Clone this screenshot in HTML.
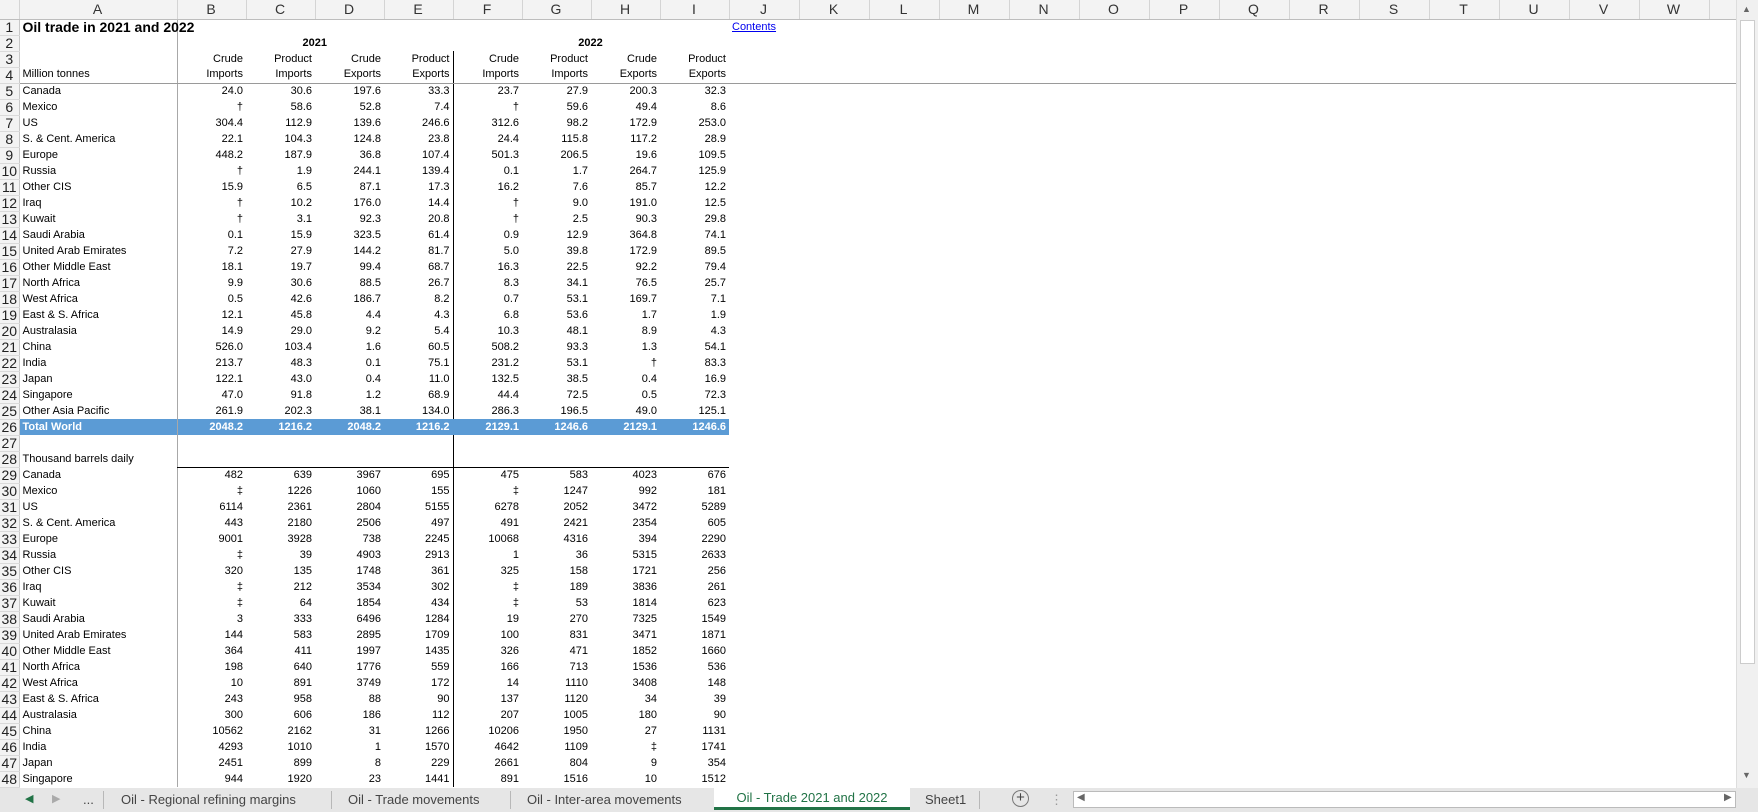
<!DOCTYPE html>
<html><head><meta charset="utf-8">
<style>
*{margin:0;padding:0;box-sizing:border-box}
body{width:1758px;height:812px;overflow:hidden;background:#fff;font-family:"Liberation Sans Narrow","Liberation Sans",Arial,sans-serif;font-size:11px;color:#000;position:relative}
table{position:absolute;left:0;top:0;border-collapse:collapse;table-layout:fixed;width:1736px}
td,th{height:16px;line-height:15px;padding:0 3px 0 2px;white-space:nowrap;overflow:visible;text-align:right;font-weight:normal}
th.r{background:#f3f3f3;border-right:1px solid #c8c8c8;border-bottom:1px solid #dadada;text-align:center;font-size:14px;color:#222;padding:0;font-family:"Liberation Sans",Arial,sans-serif}
tr.h th{height:19px;background:#f3f3f3;border-right:1px solid #d4d4d4;border-bottom:1px solid #bdbdbd;font-size:14px;color:#333;text-align:center;font-family:"Liberation Sans",Arial,sans-serif}
td.a{text-align:left;padding-left:3px}
tr td:nth-child(3){border-left:1px solid #a8a8a8}
tr.b td:nth-child(6){border-right:1px solid #000}
tr.g td{border-bottom:1px solid #9a9a9a}
tr.k td:nth-child(n+3):nth-child(-n+10){border-bottom:1px solid #000}
tr.t td:nth-child(-n+10){background:#5b9bd5;color:#fff;font-weight:bold}
tr.t td:nth-child(6){border-right:1px solid #5b9bd5}
.tabs{position:absolute;left:0;top:788px;width:1758px;height:24px;background:#e6e6e6;font-family:"Liberation Sans",Arial,sans-serif;font-size:13px;color:#444}
.tabs span{position:absolute;top:4px}
.sep{position:absolute;top:3px;width:1px;height:18px;background:#b8b8b8}
.act{position:absolute;left:714px;top:0;width:196px;height:22px;background:#fff;border-bottom:3px solid #217346;color:#217346;text-align:center;line-height:20px}
.vs{position:absolute;left:1736px;top:0;width:22px;height:788px;background:#f0f0f0;border-left:1px solid #ddd}
</style></head><body>
<table>
<colgroup><col style="width:19px"><col style="width:158px"><col span="8" style="width:69px"><col span="14" style="width:70px"><col style="width:27px"></colgroup>
<tr class="h"><th style="background:#f3f3f3"></th><th>A</th><th>B</th><th>C</th><th>D</th><th>E</th><th>F</th><th>G</th><th>H</th><th>I</th><th>J</th><th>K</th><th>L</th><th>M</th><th>N</th><th>O</th><th>P</th><th>Q</th><th>R</th><th>S</th><th>T</th><th>U</th><th>V</th><th>W</th><th></th></tr>
<tr><th class="r">1</th><td class="a" style="font-weight:bold;font-size:14px">Oil trade in 2021 and 2022</td><td></td><td></td><td></td><td></td><td></td><td></td><td></td><td></td><td class="a"><span style="color:#0000ee;text-decoration:underline">Contents</span></td><td colspan="14"></td></tr>
<tr><th class="r">2</th><td></td><td colspan="4" style="text-align:center;font-weight:bold;border-left:1px solid #a8a8a8">2021</td><td colspan="4" style="text-align:center;font-weight:bold">2022</td><td colspan="15"></td></tr>
<tr class="b"><th class="r">3</th><td></td><td>Crude</td><td>Product</td><td>Crude</td><td>Product</td><td>Crude</td><td>Product</td><td>Crude</td><td>Product</td><td colspan="15"></td></tr>
<tr class="b g"><th class="r">4</th><td class="a">Million tonnes</td><td>Imports</td><td>Imports</td><td>Exports</td><td>Exports</td><td>Imports</td><td>Imports</td><td>Exports</td><td>Exports</td><td colspan="15"></td></tr>
<tr class="b"><th class="r">5</th><td class="a">Canada</td><td>24.0</td><td>30.6</td><td>197.6</td><td>33.3</td><td>23.7</td><td>27.9</td><td>200.3</td><td>32.3</td><td colspan="15"></td></tr>
<tr class="b"><th class="r">6</th><td class="a">Mexico</td><td>†</td><td>58.6</td><td>52.8</td><td>7.4</td><td>†</td><td>59.6</td><td>49.4</td><td>8.6</td><td colspan="15"></td></tr>
<tr class="b"><th class="r">7</th><td class="a">US</td><td>304.4</td><td>112.9</td><td>139.6</td><td>246.6</td><td>312.6</td><td>98.2</td><td>172.9</td><td>253.0</td><td colspan="15"></td></tr>
<tr class="b"><th class="r">8</th><td class="a">S. &amp; Cent. America</td><td>22.1</td><td>104.3</td><td>124.8</td><td>23.8</td><td>24.4</td><td>115.8</td><td>117.2</td><td>28.9</td><td colspan="15"></td></tr>
<tr class="b"><th class="r">9</th><td class="a">Europe</td><td>448.2</td><td>187.9</td><td>36.8</td><td>107.4</td><td>501.3</td><td>206.5</td><td>19.6</td><td>109.5</td><td colspan="15"></td></tr>
<tr class="b"><th class="r">10</th><td class="a">Russia</td><td>†</td><td>1.9</td><td>244.1</td><td>139.4</td><td>0.1</td><td>1.7</td><td>264.7</td><td>125.9</td><td colspan="15"></td></tr>
<tr class="b"><th class="r">11</th><td class="a">Other CIS</td><td>15.9</td><td>6.5</td><td>87.1</td><td>17.3</td><td>16.2</td><td>7.6</td><td>85.7</td><td>12.2</td><td colspan="15"></td></tr>
<tr class="b"><th class="r">12</th><td class="a">Iraq</td><td>†</td><td>10.2</td><td>176.0</td><td>14.4</td><td>†</td><td>9.0</td><td>191.0</td><td>12.5</td><td colspan="15"></td></tr>
<tr class="b"><th class="r">13</th><td class="a">Kuwait</td><td>†</td><td>3.1</td><td>92.3</td><td>20.8</td><td>†</td><td>2.5</td><td>90.3</td><td>29.8</td><td colspan="15"></td></tr>
<tr class="b"><th class="r">14</th><td class="a">Saudi Arabia</td><td>0.1</td><td>15.9</td><td>323.5</td><td>61.4</td><td>0.9</td><td>12.9</td><td>364.8</td><td>74.1</td><td colspan="15"></td></tr>
<tr class="b"><th class="r">15</th><td class="a">United Arab Emirates</td><td>7.2</td><td>27.9</td><td>144.2</td><td>81.7</td><td>5.0</td><td>39.8</td><td>172.9</td><td>89.5</td><td colspan="15"></td></tr>
<tr class="b"><th class="r">16</th><td class="a">Other Middle East</td><td>18.1</td><td>19.7</td><td>99.4</td><td>68.7</td><td>16.3</td><td>22.5</td><td>92.2</td><td>79.4</td><td colspan="15"></td></tr>
<tr class="b"><th class="r">17</th><td class="a">North Africa</td><td>9.9</td><td>30.6</td><td>88.5</td><td>26.7</td><td>8.3</td><td>34.1</td><td>76.5</td><td>25.7</td><td colspan="15"></td></tr>
<tr class="b"><th class="r">18</th><td class="a">West Africa</td><td>0.5</td><td>42.6</td><td>186.7</td><td>8.2</td><td>0.7</td><td>53.1</td><td>169.7</td><td>7.1</td><td colspan="15"></td></tr>
<tr class="b"><th class="r">19</th><td class="a">East &amp; S. Africa</td><td>12.1</td><td>45.8</td><td>4.4</td><td>4.3</td><td>6.8</td><td>53.6</td><td>1.7</td><td>1.9</td><td colspan="15"></td></tr>
<tr class="b"><th class="r">20</th><td class="a">Australasia</td><td>14.9</td><td>29.0</td><td>9.2</td><td>5.4</td><td>10.3</td><td>48.1</td><td>8.9</td><td>4.3</td><td colspan="15"></td></tr>
<tr class="b"><th class="r">21</th><td class="a">China</td><td>526.0</td><td>103.4</td><td>1.6</td><td>60.5</td><td>508.2</td><td>93.3</td><td>1.3</td><td>54.1</td><td colspan="15"></td></tr>
<tr class="b"><th class="r">22</th><td class="a">India</td><td>213.7</td><td>48.3</td><td>0.1</td><td>75.1</td><td>231.2</td><td>53.1</td><td>†</td><td>83.3</td><td colspan="15"></td></tr>
<tr class="b"><th class="r">23</th><td class="a">Japan</td><td>122.1</td><td>43.0</td><td>0.4</td><td>11.0</td><td>132.5</td><td>38.5</td><td>0.4</td><td>16.9</td><td colspan="15"></td></tr>
<tr class="b"><th class="r">24</th><td class="a">Singapore</td><td>47.0</td><td>91.8</td><td>1.2</td><td>68.9</td><td>44.4</td><td>72.5</td><td>0.5</td><td>72.3</td><td colspan="15"></td></tr>
<tr class="b"><th class="r">25</th><td class="a">Other Asia Pacific</td><td>261.9</td><td>202.3</td><td>38.1</td><td>134.0</td><td>286.3</td><td>196.5</td><td>49.0</td><td>125.1</td><td colspan="15"></td></tr>
<tr class="b t"><th class="r">26</th><td class="a">Total World</td><td>2048.2</td><td>1216.2</td><td>2048.2</td><td>1216.2</td><td>2129.1</td><td>1246.6</td><td>2129.1</td><td>1246.6</td><td colspan="15" style="background:#fff"></td></tr>
<tr class="b"><th class="r">27</th><td></td><td></td><td></td><td></td><td></td><td></td><td></td><td></td><td></td><td colspan="15"></td></tr>
<tr class="b k"><th class="r">28</th><td class="a">Thousand barrels daily</td><td></td><td></td><td></td><td></td><td></td><td></td><td></td><td></td><td colspan="15"></td></tr>
<tr class="b"><th class="r">29</th><td class="a">Canada</td><td>482</td><td>639</td><td>3967</td><td>695</td><td>475</td><td>583</td><td>4023</td><td>676</td><td colspan="15"></td></tr>
<tr class="b"><th class="r">30</th><td class="a">Mexico</td><td>‡</td><td>1226</td><td>1060</td><td>155</td><td>‡</td><td>1247</td><td>992</td><td>181</td><td colspan="15"></td></tr>
<tr class="b"><th class="r">31</th><td class="a">US</td><td>6114</td><td>2361</td><td>2804</td><td>5155</td><td>6278</td><td>2052</td><td>3472</td><td>5289</td><td colspan="15"></td></tr>
<tr class="b"><th class="r">32</th><td class="a">S. &amp; Cent. America</td><td>443</td><td>2180</td><td>2506</td><td>497</td><td>491</td><td>2421</td><td>2354</td><td>605</td><td colspan="15"></td></tr>
<tr class="b"><th class="r">33</th><td class="a">Europe</td><td>9001</td><td>3928</td><td>738</td><td>2245</td><td>10068</td><td>4316</td><td>394</td><td>2290</td><td colspan="15"></td></tr>
<tr class="b"><th class="r">34</th><td class="a">Russia</td><td>‡</td><td>39</td><td>4903</td><td>2913</td><td>1</td><td>36</td><td>5315</td><td>2633</td><td colspan="15"></td></tr>
<tr class="b"><th class="r">35</th><td class="a">Other CIS</td><td>320</td><td>135</td><td>1748</td><td>361</td><td>325</td><td>158</td><td>1721</td><td>256</td><td colspan="15"></td></tr>
<tr class="b"><th class="r">36</th><td class="a">Iraq</td><td>‡</td><td>212</td><td>3534</td><td>302</td><td>‡</td><td>189</td><td>3836</td><td>261</td><td colspan="15"></td></tr>
<tr class="b"><th class="r">37</th><td class="a">Kuwait</td><td>‡</td><td>64</td><td>1854</td><td>434</td><td>‡</td><td>53</td><td>1814</td><td>623</td><td colspan="15"></td></tr>
<tr class="b"><th class="r">38</th><td class="a">Saudi Arabia</td><td>3</td><td>333</td><td>6496</td><td>1284</td><td>19</td><td>270</td><td>7325</td><td>1549</td><td colspan="15"></td></tr>
<tr class="b"><th class="r">39</th><td class="a">United Arab Emirates</td><td>144</td><td>583</td><td>2895</td><td>1709</td><td>100</td><td>831</td><td>3471</td><td>1871</td><td colspan="15"></td></tr>
<tr class="b"><th class="r">40</th><td class="a">Other Middle East</td><td>364</td><td>411</td><td>1997</td><td>1435</td><td>326</td><td>471</td><td>1852</td><td>1660</td><td colspan="15"></td></tr>
<tr class="b"><th class="r">41</th><td class="a">North Africa</td><td>198</td><td>640</td><td>1776</td><td>559</td><td>166</td><td>713</td><td>1536</td><td>536</td><td colspan="15"></td></tr>
<tr class="b"><th class="r">42</th><td class="a">West Africa</td><td>10</td><td>891</td><td>3749</td><td>172</td><td>14</td><td>1110</td><td>3408</td><td>148</td><td colspan="15"></td></tr>
<tr class="b"><th class="r">43</th><td class="a">East &amp; S. Africa</td><td>243</td><td>958</td><td>88</td><td>90</td><td>137</td><td>1120</td><td>34</td><td>39</td><td colspan="15"></td></tr>
<tr class="b"><th class="r">44</th><td class="a">Australasia</td><td>300</td><td>606</td><td>186</td><td>112</td><td>207</td><td>1005</td><td>180</td><td>90</td><td colspan="15"></td></tr>
<tr class="b"><th class="r">45</th><td class="a">China</td><td>10562</td><td>2162</td><td>31</td><td>1266</td><td>10206</td><td>1950</td><td>27</td><td>1131</td><td colspan="15"></td></tr>
<tr class="b"><th class="r">46</th><td class="a">India</td><td>4293</td><td>1010</td><td>1</td><td>1570</td><td>4642</td><td>1109</td><td>‡</td><td>1741</td><td colspan="15"></td></tr>
<tr class="b"><th class="r">47</th><td class="a">Japan</td><td>2451</td><td>899</td><td>8</td><td>229</td><td>2661</td><td>804</td><td>9</td><td>354</td><td colspan="15"></td></tr>
<tr class="b"><th class="r">48</th><td class="a">Singapore</td><td>944</td><td>1920</td><td>23</td><td>1441</td><td>891</td><td>1516</td><td>10</td><td>1512</td><td colspan="15"></td></tr>
</table>
<div class="vs">
<div style="position:absolute;left:5px;top:4px;font-size:9px;color:#666">▲</div>
<div style="position:absolute;left:3px;top:20px;width:15px;height:644px;background:#fff;border:1px solid #ccc"></div>
<div style="position:absolute;left:5px;top:770px;font-size:9px;color:#666">▼</div>
</div>
<div class="tabs">
<span style="left:25px;color:#217346;font-size:11px">◀</span>
<span style="left:52px;color:#aaa;font-size:11px">▶</span>
<span style="left:83px">...</span>
<div class="sep" style="left:103px"></div>
<span style="left:121px">Oil - Regional refining margins</span>
<div class="sep" style="left:331px"></div>
<span style="left:348px">Oil - Trade movements</span>
<div class="sep" style="left:510px"></div>
<span style="left:527px">Oil - Inter-area movements</span>
<div class="act">Oil - Trade 2021 and 2022</div>
<span style="left:925px">Sheet1</span>
<div class="sep" style="left:979px"></div>
<span style="left:1012px;top:2px;width:17px;height:17px;border:1px solid #777;border-radius:50%;text-align:center;line-height:14px;font-size:15px">+</span>
<span style="left:1050px;color:#999">⋮</span>
<div style="position:absolute;left:1073px;top:3px;width:663px;height:17px;background:#fff;border:1px solid #bbb"></div>
<span style="left:1077px;top:4px;font-size:10px;color:#666">◀</span>
<span style="left:1724px;top:4px;font-size:10px;color:#666">▶</span>
</div>
</body></html>
